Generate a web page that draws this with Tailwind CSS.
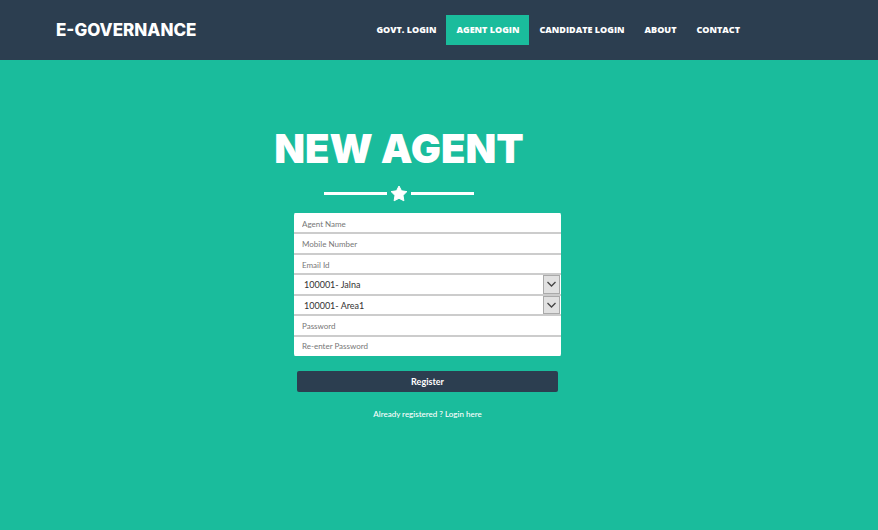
<!DOCTYPE html>
<html lang="en">
<head>
<meta charset="utf-8">
<meta name="viewport" content="width=device-width, initial-scale=1">
<title>E-Governance - New Agent</title>
<script src="https://cdn.jsdelivr.net/npm/@tailwindcss/browser@4"></script>
</head>
<body class="min-h-screen bg-[#1abc9c] font-['Lato',sans-serif] text-white">
<header class="flex min-h-[60px] flex-wrap items-center justify-between bg-[#2c3e50] pr-32 pl-14">
  <a href="#" class="font-['Inter',sans-serif] text-[17px] leading-6 font-extrabold">E-GOVERNANCE</a>
  <nav class="flex font-['Open_Sans',sans-serif] text-[9px] leading-[30px] font-extrabold">
    <a href="#" class="px-[10px]">GOVT. LOGIN</a>
    <a href="#" class="bg-[#1abc9c] px-[10px]" aria-current="page">AGENT LOGIN</a>
    <a href="#" class="px-[10px]">CANDIDATE LOGIN</a>
    <a href="#" class="px-[10px]">ABOUT</a>
    <a href="#" class="px-[10px]">CONTACT</a>
  </nav>
</header>
<main class="flex flex-col items-center pt-[65px] pr-20">
  <h1 class="font-['Inter',sans-serif] text-[40px] leading-[48px] font-black">NEW AGENT</h1>
  <div class="mt-3 flex w-[150px] items-center gap-[3px]">
    <span class="h-[3px] flex-1 bg-white"></span>
    <svg class="h-[17px] w-[18px]" viewBox="0 0 18 17" fill="#fff" stroke="#fff" stroke-width="1" stroke-linejoin="round" aria-hidden="true"><path d="M9 1l2.500 4.800 5.400.8-3.900 3.800.9 5.400L9 13.300 4.100 15.800l.9-5.400-3.900-3.800 5.400-.8z"/></svg>
    <span class="h-[3px] flex-1 bg-white"></span>
  </div>
  <form class="ml-[57px] flex w-[267px] flex-col text-[9px]">
    <div class="mt-[11px] grid h-[143px] grid-rows-7 overflow-hidden rounded-[2px] bg-white text-[#333] *:min-h-0 *:border-y *:border-[#ccc] *:first:border-t-white *:last:border-b-white">
      <input type="text" aria-label="Agent Name" placeholder="Agent Name" class="w-full px-2 pt-px text-[8px] outline-none placeholder:text-[#777]">
      <input type="tel" aria-label="Mobile Number" placeholder="Mobile Number" class="w-full px-2 pt-px text-[8px] outline-none placeholder:text-[#777]">
      <input type="email" aria-label="Email Id" placeholder="Email Id" class="w-full px-2 pt-px text-[8px] outline-none placeholder:text-[#777]">
      <div class="grid">
        <select aria-label="District" class="col-start-1 row-start-1 min-h-0 w-full appearance-none px-[10px] pt-px outline-none"><option>100001- Jalna</option></select>
        <span class="pointer-events-none col-start-1 row-start-1 mr-px flex w-[17px] items-center justify-center justify-self-end border border-[#aaa] bg-[#e1e1e1]"><svg class="h-[6px] w-[9px]" viewBox="0 0 9 6" fill="none" stroke="#444" stroke-width="1.300" aria-hidden="true"><path d="M.5 1l4 4 4-4"/></svg></span>
      </div>
      <div class="grid">
        <select aria-label="Area" class="col-start-1 row-start-1 min-h-0 w-full appearance-none px-[10px] pt-px outline-none"><option>100001- Area1</option></select>
        <span class="pointer-events-none col-start-1 row-start-1 mr-px flex w-[17px] items-center justify-center justify-self-end border border-[#aaa] bg-[#e1e1e1]"><svg class="h-[6px] w-[9px]" viewBox="0 0 9 6" fill="none" stroke="#444" stroke-width="1.300" aria-hidden="true"><path d="M.5 1l4 4 4-4"/></svg></span>
      </div>
      <input type="password" aria-label="Password" placeholder="Password" class="w-full px-2 pt-px text-[8px] outline-none placeholder:text-[#777]">
      <input type="password" aria-label="Re-enter Password" placeholder="Re-enter Password" class="w-full px-2 pt-px text-[8px] outline-none placeholder:text-[#777]">
    </div>
    <button type="submit" class="mx-[3px] mt-[15px] h-[21px] rounded-[2px] bg-[#2c3e50] font-bold">Register</button>
    <a href="#" class="mt-4 self-center text-[8px] leading-3 font-medium">Already registered ? Login here</a>
  </form>
</main>
</body>
</html>
